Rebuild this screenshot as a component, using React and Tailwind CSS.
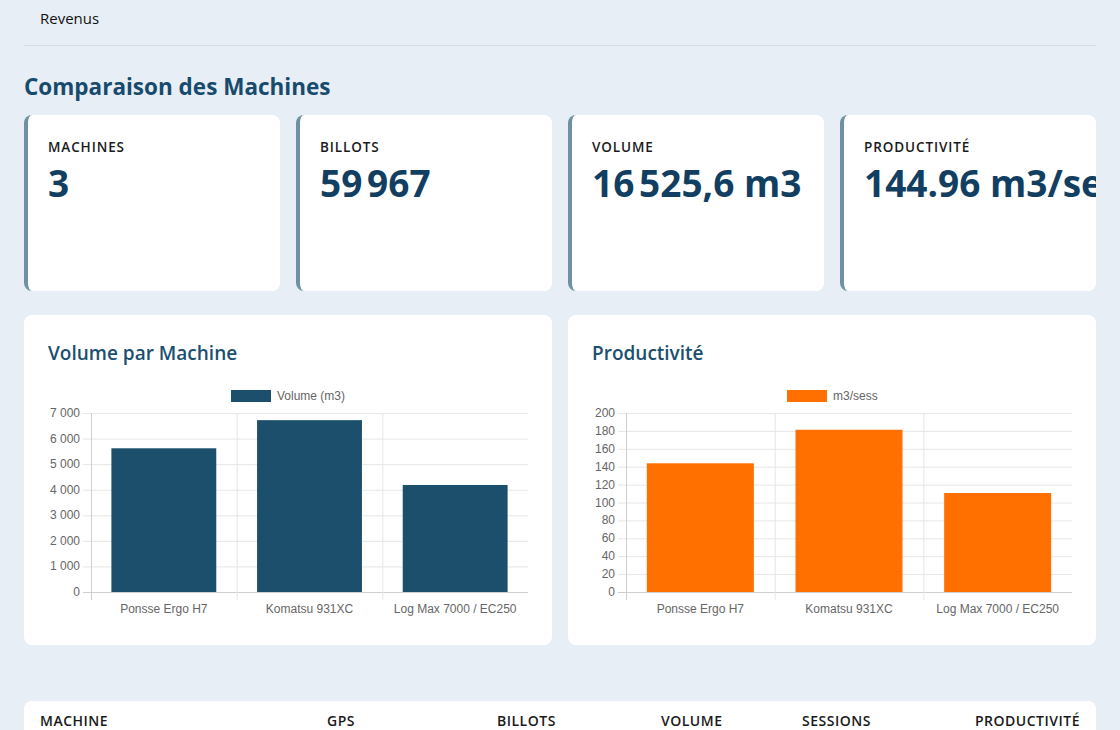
const font = { fontFamily: '"Open Sans", "Noto Sans", sans-serif' };

const stats = [
  { label: "Machines", value: "3" },
  { label: "Billots", value: "59\u202F967" },
  { label: "Volume", value: "16\u202F525,6 m3" },
  { label: "Productivité", value: "144.96 m3/sess" },
];

const machines = ["Ponsse Ergo H7", "Komatsu 931XC", "Log Max 7000 / EC250"];

function BarChart({ data, max, step, color, legend, fmt, plotLeft, labelRight, legendX }) {
  const W = 480;
  const top = 28;
  const bottom = 207;
  const plotW = W - plotLeft;
  const catW = plotW / data.length;
  const ticks = [];
  for (let v = 0; v <= max; v += step) ticks.push(v);
  const y = (v) => bottom - (v / max) * (bottom - top);

  return (
    <svg width={W} height={236} className="block" style={{ fontFamily: '"Liberation Sans", Arial, sans-serif' }}>
      <rect x={legendX} y={5} width={40} height={12} fill={color} />
      <text x={legendX + 46} y={15} fontSize="12" fill="#666">
        {legend}
      </text>
      {ticks.map((v) => (
        <g key={v}>
          <line x1={plotLeft - 8} x2={W} y1={y(v) + 0.5} y2={y(v) + 0.5} stroke={v === 0 ? "#cfcfcf" : "#e6e6e6"} />
          <text x={labelRight} y={y(v) + 4} fontSize="12" fill="#666" textAnchor="end">
            {fmt(v)}
          </text>
        </g>
      ))}
      {data.map((d, i) => (
        <line
          key={"g" + i}
          x1={plotLeft + i * catW + 0.5}
          x2={plotLeft + i * catW + 0.5}
          y1={top}
          y2={bottom + 8}
          stroke={i === 0 ? "#cfcfcf" : "#e6e6e6"}
        />
      ))}
      {data.map((d, i) => {
        const bw = catW * 0.72;
        const bx = plotLeft + i * catW + (catW - bw) / 2;
        return (
          <g key={"b" + i}>
            <rect x={bx} y={y(d)} width={bw} height={bottom - y(d)} fill={color} />
            <text x={plotLeft + i * catW + catW / 2} y={228} fontSize="12" fill="#666" textAnchor="middle">
              {machines[i]}
            </text>
          </g>
        );
      })}
    </svg>
  );
}

const thousands = (v) => (v === 0 ? "0" : `${Math.floor(v / 1000)} ${String(v % 1000).padStart(3, "0")}`);

export default function App() {
  return (
    <div className="min-h-screen bg-[#e8eef5] px-6" style={font}>
      <div className="flex h-[46px] items-start border-b border-[#d3dbe3]">
        <span className="px-4 pt-[7px] text-[15px] font-medium text-[#111]">Revenus</span>
      </div>

      <h1 className="mt-[25px] text-[22.5px] font-bold leading-8 text-[#174b6d]">Comparaison des Machines</h1>

      <div className="mt-[12px] grid grid-cols-4 gap-4">
        {stats.map((s) => (
          <div
            key={s.label}
            className="h-[176px] overflow-hidden rounded-lg border-l-4 border-[#6f8fa3] bg-white pl-5 pt-[22px]"
          >
            <div className="text-[13.5px] font-semibold uppercase tracking-[0.9px] text-[#1a1a1a]">{s.label}</div>
            <div className="mt-[3px] whitespace-nowrap text-[37px] font-bold leading-[46px] text-[#123f61]">
              {s.value}
            </div>
          </div>
        ))}
      </div>

      <div className="mt-6 grid grid-cols-2 gap-4">
        <div className="rounded-lg bg-white px-6 pb-6 pt-[24px]">
          <h2 className="text-[19px] font-semibold leading-7 text-[#1a4f70]">Volume par Machine</h2>
          <div className="mt-[18px]">
            <BarChart
              data={[5620, 6720, 4185]}
              max={7000}
              step={1000}
              color="#1b4f6c"
              legend="Volume (m3)"
              fmt={thousands}
              plotLeft={43}
              labelRight={32}
              legendX={183}
            />
          </div>
        </div>
        <div className="rounded-lg bg-white px-6 pb-6 pt-[24px]">
          <h2 className="text-[19px] font-semibold leading-7 text-[#1a4f70]">Productivité</h2>
          <div className="mt-[18px]">
            <BarChart
              data={[143.8, 181.3, 110.6]}
              max={200}
              step={20}
              color="#ff7000"
              legend="m3/sess"
              fmt={(v) => String(v)}
              plotLeft={34}
              labelRight={23}
              legendX={195}
            />
          </div>
        </div>
      </div>

      <div className="mt-14 rounded-lg bg-white px-4 pt-[9px] pb-4">
        <div className="grid grid-cols-[287px_170px_164px_141px_173px_1fr] text-[14px] font-semibold uppercase tracking-[0.5px] text-[#1a1a1a]">
          <div>Machine</div>
          <div>GPS</div>
          <div>Billots</div>
          <div>Volume</div>
          <div>Sessions</div>
          <div>Productivité</div>
        </div>
      </div>
    </div>
  );
}
